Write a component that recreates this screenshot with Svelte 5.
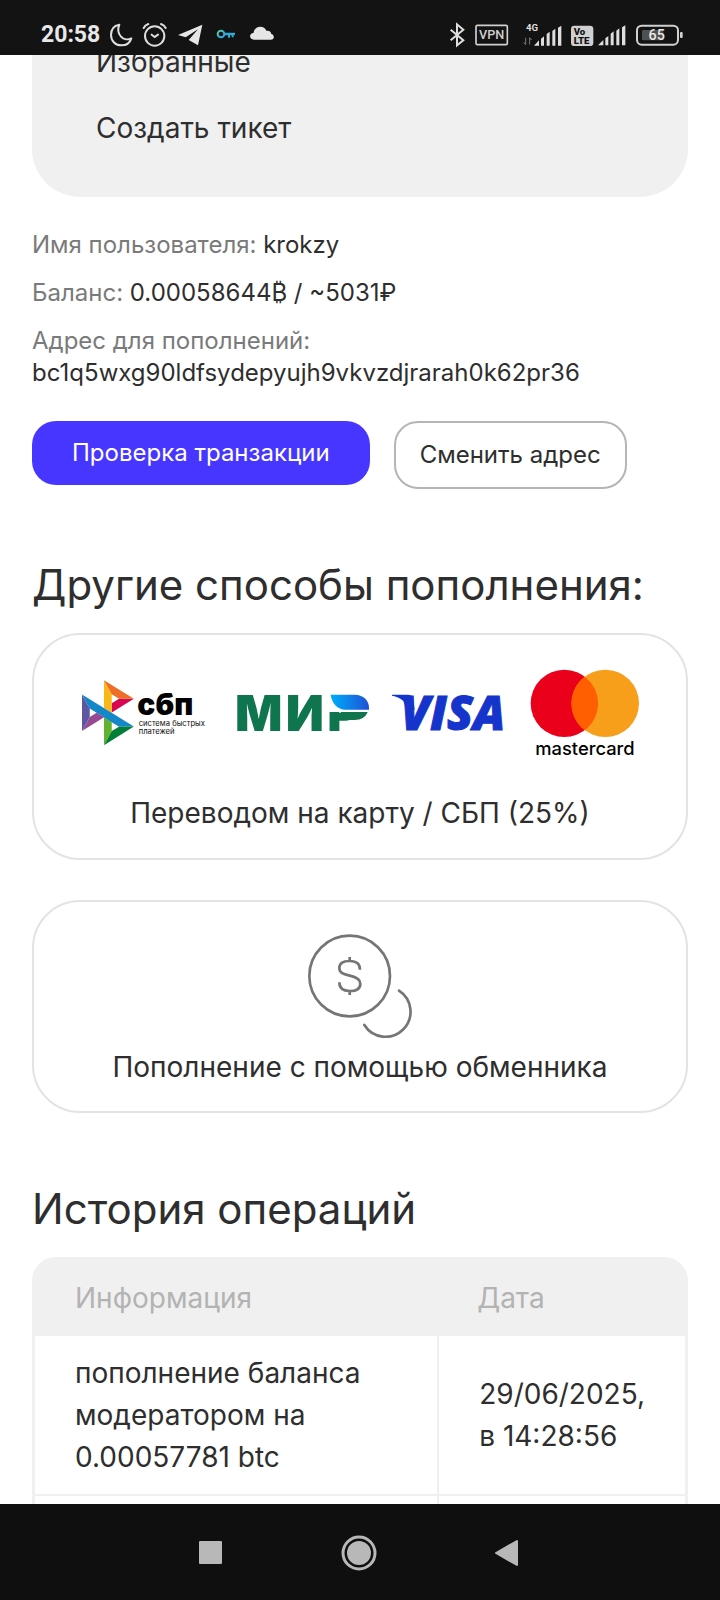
<script>
    const username = 'krokzy';
    const balance = '0.00058644₿ / ~5031₽';
    const address = 'bc1q5wxg90ldfsydepyujh9vkvzdjrarah0k62pr36';

    const menu = ['Избранные', 'Создать тикет'];

    const operations = [
        { info: 'пополнение баланса модератором на 0.00057781 btc', date: '29/06/2025,', time: 'в 14:28:56' },
        { info: '', date: '', time: '' }
    ];
</script>

<div class="screen">
    <header class="status">
        <div class="status-side left">
            <span class="clock">20:58</span>
            <svg width="22" height="24" viewBox="330 68 66 72" fill="none" stroke="#dedede" stroke-width="6" stroke-linejoin="round">
                <path d="M358 73 C340 76 333 90 333 104 C333 122 347 135 364 135 C379 135 390 127 394 114 C384 119 371 118 363 109 C354 99 353 85 358 73 Z" />
            </svg>
            <svg width="26" height="24" viewBox="426 69 78 72" fill="none" stroke="#dedede" stroke-width="6" stroke-linecap="round">
                <circle cx="464" cy="108" r="29" />
                <path d="M431 84 C434 78 439 74 445 72 M483 72 C489 74 494 78 497 84" />
                <path d="M455 104 L464 111 L474 104" />
            </svg>
            <svg width="26" height="24" viewBox="534 69 78 72" fill="#e6e6e6">
                <path d="M607 74 L594 136 L566 120 L594 88 L557 112 L534 105 Z" />
            </svg>
            <svg width="24" height="24" viewBox="642 69 72 72">
                <defs>
                    <linearGradient id="key" x1="0" y1="0" x2="1" y2="1">
                        <stop offset="0" stop-color="#4fd0a8" />
                        <stop offset="1" stop-color="#2f9fe8" />
                    </linearGradient>
                </defs>
                <circle cx="663" cy="102" r="10" fill="none" stroke="url(#key)" stroke-width="6" />
                <path d="M674 98 H705 V105 H701 V112 H695 V106 H690 V113 H684 V106 H674 Z" fill="#2fa9d2" />
            </svg>
            <svg width="28" height="24" viewBox="744 69 84 72" fill="#e6e6e6">
                <path d="M762 119 C746 119 747 99 761 98 C763 77 793 74 799 92 C812 91 814 98 813 101 C824 103 825 119 812 119 Z" />
            </svg>
        </div>
        <div class="status-side">
            <svg width="16" height="24" viewBox="268 69 48 72" fill="none" stroke="#dedede" stroke-width="6">
                <path d="M273 89 L311 121 L292 136 V73 L311 89 L273 121" />
            </svg>
            <svg width="38" height="24" viewBox="344 69 114 72">
                <rect x="347" y="76" width="94" height="58" rx="4" fill="none" stroke="#d0d0d0" stroke-width="5" />
                <text x="394" y="118" class="vpn">VPN</text>
            </svg>
            <svg width="38" height="24" viewBox="489 66 114 72" fill="#dedede">
                <text x="498" y="90" class="net">4G</text>
                <path d="M497 110 V131 L491 124 M509 131 V110 L515 117" fill="none" stroke="#777" stroke-width="3" />
                <path d="M522 134 L537 118 V134 Z M543 113 L552 106 V134 H543 Z M560 99 L569 92 V134 H560 Z M577 90 L586 83 V134 H577 Z M594 80 L604 74 V134 H594 Z" />
            </svg>
            <svg width="55" height="24" viewBox="633 67 165 72" fill="#dedede">
                <rect x="633" y="75" width="67" height="61" rx="10" fill="#d0d0d0" />
                <text x="641" y="102" class="volte">Vo</text>
                <text x="641" y="129" class="volte">LTE</text>
                <path d="M714 134 L730 118 V134 Z M736 113 L745 106 V134 H736 Z M752 99 L761 92 V134 H752 Z M769 90 L778 83 V134 H769 Z M786 80 L796 74 V134 H786 Z" />
            </svg>
            <svg width="47" height="24" viewBox="828 69 141 72">
                <rect x="831" y="77" width="123" height="57" rx="14" fill="none" stroke="#d0d0d0" stroke-width="6" />
                <rect x="846" y="90" width="64" height="31" rx="4" fill="#505050" />
                <rect x="960" y="96" width="8" height="18" rx="3" fill="#d0d0d0" />
                <text x="890" y="120" class="charge">65</text>
            </svg>
        </div>
    </header>

    <main>
        <nav class="menu">
            {#each menu as item}
                <a href="#menu">{item}</a>
            {/each}
        </nav>

        <div class="info">
            <p>Имя пользователя: <b>{username}</b></p>
            <p>Баланс: <b>{balance}</b></p>
            <p>Адрес для пополнений: <b class="address">{address}</b></p>
        </div>

        <div class="actions">
            <button type="button" class="primary">Проверка транзакции</button>
            <button type="button" class="outline">Сменить адрес</button>
        </div>

        <h2>Другие способы пополнения:</h2>

        <div class="methods">
            <a class="method" href="#card">
                <div class="logos">
                    <svg width="132" height="88" viewBox="66 58 396 264">
                        <g transform="translate(66 92) scale(1.6 1.62)">
                            <path fill="#5b57a2" d="M0 26.12l14.532 25.975v15.844L.017 93.863 0 26.12z" />
                            <path fill="#d90751" d="M55.797 42.643l13.617-8.346 27.868-.026-41.485 25.414V42.643z" />
                            <path fill="#fab718" d="M55.72 25.967l.077 34.39-14.566-8.95V0l14.49 25.967z" />
                            <path fill="#ed6f26" d="M97.282 34.271l-27.869.026-13.693-8.33L41.231 0l56.05 34.271z" />
                            <path fill="#63b22f" d="M55.797 94.007V77.322l-14.566-8.78.008 51.458 14.558-25.993z" />
                            <path fill="#1487c9" d="M69.38 85.737L14.531 52.095 0 26.12l97.223 59.583-27.844.034z" />
                            <path fill="#017f36" d="M41.24 120l14.556-25.993 13.583-8.27 27.843-.034L41.24 120z" />
                            <path fill="#984995" d="M.017 93.863l41.333-25.32-13.896-8.526-12.922 7.922L.017 93.863z" />
                        </g>
                        <text x="232" y="195" class="sbp">сбп</text>
                        <text x="236" y="229" class="sbp-note">система быстрых</text>
                        <text x="236" y="254" class="sbp-note">платежей</text>
                    </svg>
                    <svg width="130" height="88" viewBox="534 58 390 264">
                        <defs>
                            <linearGradient id="wing">
                                <stop offset="0.1" stop-color="#00a5f8" />
                                <stop offset="1" stop-color="#2050d4" />
                            </linearGradient>
                        </defs>
                        <text x="525" y="243" dx="0 10 10" class="mir">МИР</text>
                        <rect x="806" y="130" width="122" height="57" fill="#fff" />
                        <path fill="#0f754e" d="M842 187 H923 C917 203 903 211 884 211 H842 Z" />
                        <path fill="url(#wing)" d="M812 135 H884 C912 135 929 154 927 180 H856 C833 180 815 160 812 135 Z" />
                    </svg>
                    <svg width="115" height="88" viewBox="36 58 345 264">
                        <path fill="#1434cb" d="M36 135 H84 C92 135 97 139 99 146 L104 180 H80 L70 154 C62 145 50 141 36 138 Z" />
                        <text x="62" y="242" class="visa">VISA</text>
                    </svg>
                    <svg width="108" height="88" viewBox="453 58 324 264">
                        <circle cx="553" cy="161" r="101" fill="#eb001b" />
                        <circle cx="676" cy="161" r="101" fill="#f79e1b" />
                        <path fill="#ff5f00" d="M614 81 A101 101 0 0 1 614 242 A101 101 0 0 1 614 81 Z" />
                        <text x="615" y="317" class="mastercard">mastercard</text>
                    </svg>
                </div>
                <span>Переводом на карту / СБП (25%)</span>
            </a>

            <a class="method exchange" href="#exchange">
                <svg width="104" height="104" viewBox="85 132 312 312" fill="none" stroke="#757575" stroke-width="8" stroke-linecap="round">
                    <circle cx="210" cy="258" r="121" />
                    <path d="M358 302 A75 75 0 1 1 254 405" />
                    <path stroke-linecap="butt" d="M241 239 C241 220 230 213 210 213 C190 213 179 221 179 234 C179 247 188 252 210 257 C232 262 242 268 242 281 C242 295 230 303 210 303 C190 303 179 295 179 277 M210 201 V213 M210 303 V315" />
                </svg>
                <span>Пополнение с помощью обменника</span>
            </a>
        </div>

        <h2>История операций</h2>

        <table>
            <thead>
                <tr>
                    <th>Информация</th>
                    <th>Дата</th>
                </tr>
            </thead>
            <tbody>
                {#each operations as op}
                    <tr>
                        <td>{op.info}</td>
                        <td>{op.date}<br />{op.time}</td>
                    </tr>
                {/each}
            </tbody>
        </table>
    </main>

    <footer class="navbar">
        <button type="button" aria-label="Недавние">
            <svg width="36" height="36" viewBox="0 0 36 36"><rect x="6" y="6" width="23" height="23" rx="1" fill="#b8b8b8" /></svg>
        </button>
        <button type="button" aria-label="Домой">
            <svg width="36" height="36" viewBox="0 0 36 36">
                <circle cx="18" cy="18" r="16" fill="none" stroke="#b8b8b8" stroke-width="3" />
                <circle cx="18" cy="18" r="12" fill="#b8b8b8" />
            </svg>
        </button>
        <button type="button" aria-label="Назад">
            <svg width="36" height="36" viewBox="0 0 36 36"><path d="M7 18 L28 6 V30 Z" fill="#b8b8b8" stroke="#b8b8b8" stroke-width="2" stroke-linejoin="round" /></svg>
        </button>
    </footer>
</div>

<style>
    :global(body) {
        background: #fff;
    }

    .screen {
        display: flex;
        flex-direction: column;
        height: 100vh;
        font-family: Inter, 'Noto Sans', sans-serif;
        color: #2e2e2e;
    }

    svg {
        display: block;
        flex: none;
        overflow: visible;
    }

    .status {
        flex: none;
        box-sizing: border-box;
        height: 55px;
        padding: 15px 37px 0 41px;
        display: flex;
        justify-content: space-between;
        align-items: center;
        background: #131313;
    }

    .status-side {
        display: flex;
        align-items: center;
        gap: 10px;
    }

    .clock {
        width: 59px;
        font: bold 23px/24px Roboto, sans-serif;
        color: #e8e8e8;
    }

    .vpn {
        font: 500 38px Roboto, sans-serif;
        text-anchor: middle;
        fill: #d0d0d0;
    }

    .net {
        font: bold 29px Roboto, sans-serif;
    }

    .volte {
        font: 900 29px Roboto, sans-serif;
        fill: #131313;
    }

    .charge {
        font: 500 43px Roboto, sans-serif;
        text-anchor: middle;
        fill: #e8e8e8;
    }

    main {
        flex: 1;
        min-height: 0;
        overflow: hidden;
        padding: 0 32px;
    }

    .menu {
        display: flex;
        flex-direction: column;
        align-items: flex-start;
        gap: 32px;
        margin-top: -10px;
        padding: 0 64px 52px;
        border-radius: 0 0 48px 48px;
        background: #f0f0f0;
    }

    .menu a {
        font-size: 28px;
        line-height: 34px;
        color: inherit;
        text-decoration: none;
    }

    .info {
        display: flex;
        flex-direction: column;
        gap: 16px;
        margin: 32px 0;
    }

    .info p {
        margin: 0;
        font-size: 24px;
        line-height: 32px;
        color: #7a7a7a;
    }

    .info b {
        font-weight: 400;
        color: #2e2e2e;
    }

    .info .address {
        display: block;
    }

    .actions {
        display: flex;
        align-items: flex-start;
        gap: 24px;
    }

    .actions button {
        font: 24px/32px Inter, 'Noto Sans', sans-serif;
        border-radius: 24px;
        cursor: pointer;
    }

    .primary {
        padding: 16px 40px;
        border: none;
        background: #4736ff;
        color: #fff;
    }

    .outline {
        padding: 16px 24px;
        border: 2px solid #b5b5b5;
        background: #fff;
        color: #2e2e2e;
    }

    h2 {
        margin: 72px 0 24px;
        font-size: 42px;
        line-height: 48px;
        font-weight: 400;
    }

    .methods {
        display: flex;
        flex-direction: column;
        gap: 40px;
    }

    .method {
        display: flex;
        flex-direction: column;
        align-items: center;
        gap: 39px;
        padding: 34px 0 28px;
        border: 2px solid #e3e3e3;
        border-radius: 48px;
        font-size: 28px;
        line-height: 34px;
        color: inherit;
        text-decoration: none;
    }

    .exchange {
        gap: 12px;
        padding: 32px 0 27px;
    }

    .logos {
        display: flex;
        justify-content: center;
        gap: 24px;
    }

    .sbp {
        font: 900 90px Inter, sans-serif;
        fill: #000;
    }

    .sbp-note {
        font: 400 23px Inter, sans-serif;
        fill: #111;
    }

    .mir {
        font: 900 149px Inter, sans-serif;
        fill: #0f754e;
    }

    .visa {
        font: italic 800 143px 'Open Sans', sans-serif;
        fill: #1434cb;
        stroke: #1434cb;
        stroke-width: 3;
    }

    .mastercard {
        font: 500 55px Inter, sans-serif;
        text-anchor: middle;
        fill: #000;
    }

    table {
        width: 100%;
        border: 3px solid #f0f0f0;
        border-radius: 24px 24px 0 0;
        border-spacing: 0;
        overflow: hidden;
        font-size: 28px;
        line-height: 42px;
    }

    th {
        padding: 17px 40px;
        background: #f0f0f0;
        color: #b3b3b3;
        font-weight: 400;
        text-align: left;
    }

    td {
        padding: 16px 40px;
        border-bottom: 2px solid #f0f0f0;
    }

    td + td {
        border-left: 2px solid #f0f0f0;
    }

    th + th,
    td + td {
        width: 164px;
    }

    .navbar {
        flex: none;
        display: flex;
        justify-content: center;
        gap: 112px;
        padding: 31px 2px 29px 0;
        background: #0f0f0f;
    }

    .navbar button {
        padding: 0;
        border: none;
        background: none;
    }
</style>
